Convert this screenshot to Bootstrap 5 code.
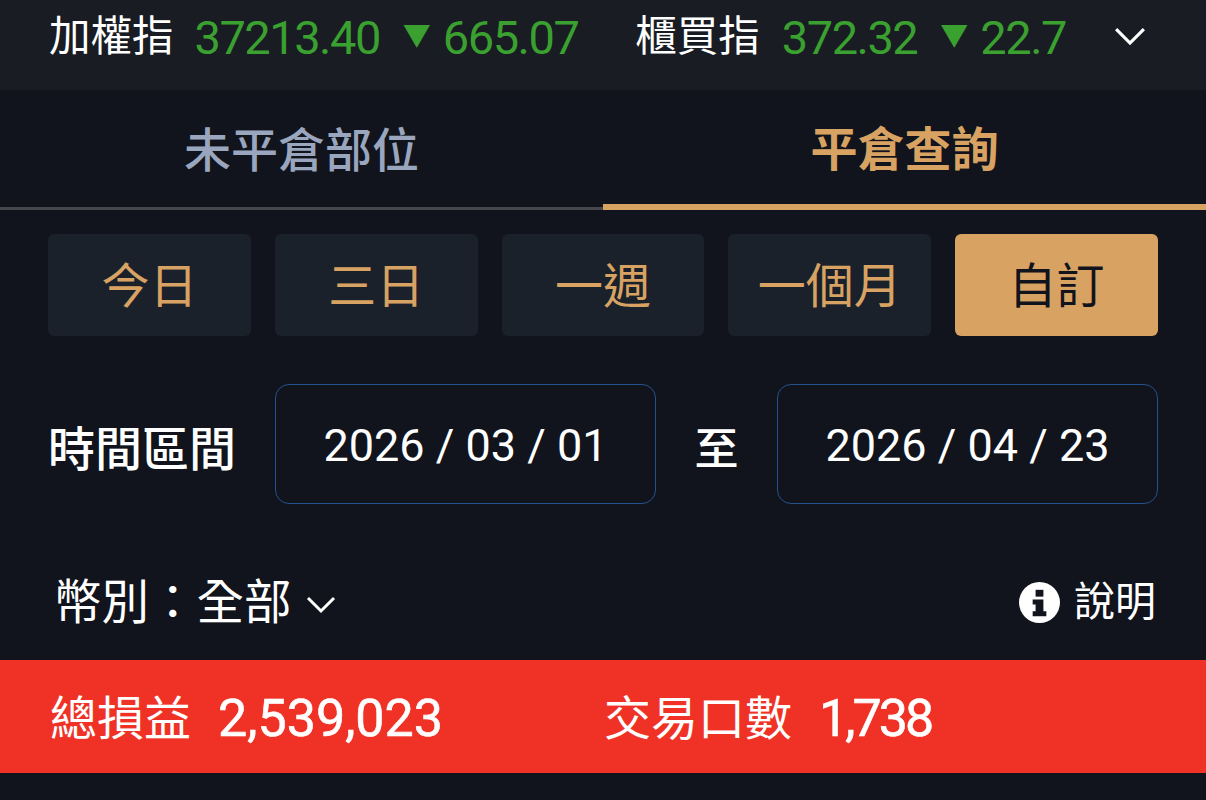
<!DOCTYPE html>
<html lang="zh-Hant">
<head>
  <meta charset="UTF-8">
  <meta name="viewport" content="width=device-width, initial-scale=1.0">
  <title>平倉查詢</title>
  <link href="https://cdn.jsdelivr.net/npm/bootstrap@5.3.0/dist/css/bootstrap.min.css" rel="stylesheet">
  <style>
    html, body {
      height: 800px;
      overflow: hidden;
    }
    body {
      background-color: #11141c;
      color: #fff;
      font-family: "Roboto", "Noto Sans CJK TC", sans-serif;
    }
    .ticker-bar {
      height: 90px;
      background-color: #191c23;
      padding: 0 0 16px 49px;
      font-size: 41.5px;
      line-height: 1;
      white-space: nowrap;
    }
    .ticker-group {
      gap: 21px;
    }
    .ticker-second {
      margin-left: 57px;
      gap: 22px;
    }
    .ticker-num {
      color: #3aa02f;
      font-size: 47px;
      letter-spacing: -1.5px;
    }
    .ticker-arrow {
      color: #3aa02f;
      font-size: 28px;
      margin: 0 12px 0 23px;
    }
    .ticker-values {
      width: 286px;
    }
    .ticker-toggle {
      width: 32px;
      margin-left: 46px;
    }
    .tab-row {
      height: 120px;
    }
    .tab-item {
      flex: 1;
      font-size: 47px;
      font-weight: 500;
      padding-top: 6px;
      color: #9aa6bd;
      border-bottom: 3px solid #47484d;
    }
    .tab-item.is-on {
      color: #d8a263;
      font-weight: 700;
      border-bottom: 6px solid #d8a263;
    }
    .range-row {
      padding: 24px 48px 0;
      gap: 24px;
    }
    .range-btn {
      flex: 1;
      height: 102px;
      padding: 3px 0 0;
      font-size: 48px;
      color: #d8a263;
      background-color: #1a212b;
      border: 0;
      border-radius: 6px;
    }
    .range-btn.is-on {
      color: #11141c;
      background-color: #d8a263;
    }
    .date-row {
      padding: 48px 48px 0;
    }
    .date-label {
      width: 227px;
      padding-top: 12px;
      font-size: 47px;
      font-weight: 500;
    }
    .date-box {
      width: 381px;
      height: 120px;
      padding-top: 4px;
      font-size: 45px;
      border: 1.5px solid #24528f;
      border-radius: 14px;
    }
    .date-to {
      width: 121px;
      padding-top: 12px;
      font-size: 44px;
      font-weight: 500;
    }
    .filter-row {
      height: 156px;
      padding: 40px 50px 0 54px;
    }
    .filter-cur {
      padding-top: 4px;
      font-size: 47.5px;
      line-height: 1;
    }
    .filter-caret {
      margin-left: 14px;
    }
    .filter-help {
      font-size: 41px;
      line-height: 1;
      gap: 14px;
    }
    .sum-bar {
      height: 113px;
      padding: 4px 50px 0;
      background-color: #f03226;
      font-size: 47px;
      line-height: 1;
    }
    .sum-num {
      font-size: 52px;
      margin-left: 27px;
      -webkit-text-stroke: 0.6px #fff;
    }
    .sum-num-tight {
      letter-spacing: -3px;
    }
    .sum-left {
      width: 554px;
    }
  </style>
</head>
<body>
  <div class="ticker-bar d-flex align-items-center">
    <div class="ticker-group d-flex align-items-center">
      <span>加權指</span>
      <span class="d-flex align-items-center">
        <span class="ticker-num">37213.40</span>
        <span class="ticker-arrow">▼</span>
        <span class="ticker-num">665.07</span>
      </span>
    </div>
    <div class="ticker-group ticker-second d-flex align-items-center">
      <span>櫃買指</span>
      <span class="ticker-values d-flex align-items-center">
        <span class="ticker-num">372.32</span>
        <span class="ticker-arrow">▼</span>
        <span class="ticker-num">22.7</span>
      </span>
    </div>
    <svg class="ticker-toggle" viewBox="0 0 30 20" fill="none" stroke="#fff" stroke-width="3">
      <path d="M2 3 L15 16 L28 3"/>
    </svg>
  </div>

  <div class="tab-row d-flex">
    <div class="tab-item d-flex align-items-center justify-content-center">未平倉部位</div>
    <div class="tab-item is-on d-flex align-items-center justify-content-center">平倉查詢</div>
  </div>

  <div class="range-row d-flex">
    <button class="btn range-btn">今日</button>
    <button class="btn range-btn">三日</button>
    <button class="btn range-btn">一週</button>
    <button class="btn range-btn">一個月</button>
    <button class="btn range-btn is-on">自訂</button>
  </div>

  <div class="date-row d-flex align-items-center">
    <div class="date-label">時間區間</div>
    <div class="date-box d-flex align-items-center justify-content-center">2026 / 03 / 01</div>
    <div class="date-to text-center">至</div>
    <div class="date-box d-flex align-items-center justify-content-center">2026 / 04 / 23</div>
  </div>

  <div class="filter-row d-flex align-items-center justify-content-between">
    <div class="filter-cur d-flex align-items-center">
      <span>幣別：全部</span>
      <svg class="filter-caret" width="30" height="20" viewBox="0 0 30 20" fill="none" stroke="#fff" stroke-width="3">
        <path d="M2 4 L15 17 L28 4"/>
      </svg>
    </div>
    <div class="filter-help d-flex align-items-center">
      <svg width="41" height="41" viewBox="0 0 42 42">
        <circle cx="21" cy="21" r="21" fill="#fff"/>
        <rect x="17" y="8" width="8" height="7" fill="#11141c"/>
        <path d="M14 18 H25 V30 H28 V35 H14 V30 H17 V23 H14 Z" fill="#11141c"/>
      </svg>
      <span>說明</span>
    </div>
  </div>

  <div class="sum-bar d-flex align-items-center">
    <div class="sum-left d-flex align-items-center">
      <span>總損益</span>
      <span class="sum-num">2,539,023</span>
    </div>
    <div class="d-flex align-items-center">
      <span>交易口數</span>
      <span class="sum-num sum-num-tight">1,738</span>
    </div>
  </div>

  <script src="https://cdn.jsdelivr.net/npm/bootstrap@5.3.0/dist/js/bootstrap.bundle.min.js"></script>
</body>
</html>
